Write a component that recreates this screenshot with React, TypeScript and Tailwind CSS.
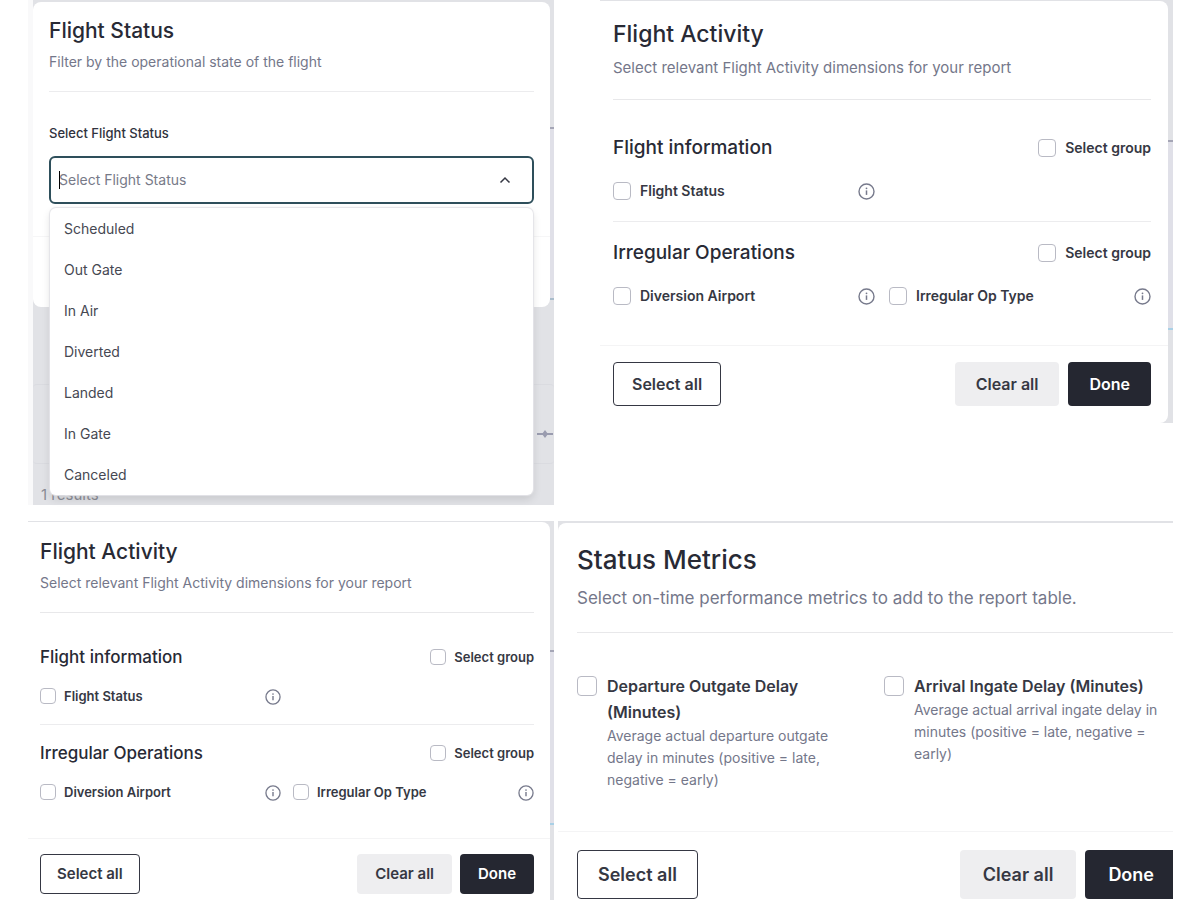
import { useState, type ReactNode } from "react";

type Size = "sm" | "md" | "lg";

const titleSize: Record<Size, string> = {
  sm: "text-[21px] leading-8",
  md: "text-[23px] leading-9",
  lg: "text-[26px] leading-10",
};
const subtitleSize: Record<Size, string> = {
  sm: "text-sm leading-[30px]",
  md: "text-[15px] leading-8",
  lg: "text-[17px] leading-9",
};
const buttonSize: Record<Size, string> = {
  sm: "h-10 text-[15px]",
  md: "h-11 text-base",
  lg: "h-[49px] text-lg",
};
const outlinePad: Record<Size, string> = { sm: "px-4", md: "px-[18px]", lg: "px-5" };
const filledPad: Record<Size, string> = { sm: "px-[18px]", md: "px-[21px]", lg: "px-[23px]" };
const boxSize: Record<Size, string> = {
  sm: "size-4",
  md: "size-[18px]",
  lg: "size-5",
};
const labelSize: Record<Size, string> = {
  sm: "gap-2 text-[13px] leading-5",
  md: "gap-[9px] text-sm leading-5",
  lg: "gap-[10px] text-base leading-[26px]",
};

function Heading({ size, title, subtitle }: { size: Size; title: string; subtitle: string }) {
  return (
    <header>
      <h2 className={"font-medium text-[#282a35] " + titleSize[size]}>{title}</h2>
      <p className={"text-[#74778a] " + subtitleSize[size]}>{subtitle}</p>
    </header>
  );
}

function Box({ size }: { size: Size }) {
  return (
    <input
      type="checkbox"
      className={
        "shrink-0 appearance-none rounded-[4px] border border-[#b9bac4] bg-white checked:bg-[#252731] " + boxSize[size]
      }
    />
  );
}

function Info({ size }: { size: Size }) {
  return (
    <button type="button" aria-label="More information" className="mt-px text-[#777a8c]">
      <svg viewBox="0 0 17 17" fill="none" className={size === "sm" ? "size-4" : "size-[17px]"}>
        <circle cx="8.5" cy="8.5" r="7.5" stroke="currentColor" strokeWidth="1.4" />
        <path d="M8.5 7.400v4.500" stroke="currentColor" strokeWidth="1.5" />
        <circle cx="8.5" cy="5.3" r="0.9" fill="currentColor" />
      </svg>
    </button>
  );
}

function CheckLabel({ size, text }: { size: Size; text: string }) {
  return (
    <label className={"flex items-center font-semibold text-[#363843] " + labelSize[size]}>
      <Box size={size} />
      {text}
    </label>
  );
}

function Group({ size, name, options }: { size: Size; name: string; options: string[] }) {
  const small = size === "sm";
  return (
    <section>
      <div className="flex items-center justify-between">
        <h3 className={"font-medium text-[#282a35] " + (small ? "text-[17px] leading-6" : "text-[19px] leading-7")}>
          {name}
        </h3>
        <CheckLabel size={size} text="Select group" />
      </div>
      <div className={"grid grid-cols-2 " + (small ? "mt-[17px] gap-x-3" : "mt-[19px] gap-x-[14px]")}>
        {options.map((o) => (
          <div key={o} className="flex items-center justify-between">
            <CheckLabel size={size} text={o} />
            <Info size={size} />
          </div>
        ))}
      </div>
    </section>
  );
}

function Actions({ size }: { size: Size }) {
  const base = "rounded-[4px] font-semibold " + buttonSize[size] + " ";
  return (
    <div className="flex justify-between">
      <button
        type="button"
        className={base + outlinePad[size] + " border border-[#353743] bg-white text-[#363843]"}
      >
        Select all
      </button>
      <div className={size === "sm" ? "flex gap-2" : "flex gap-[9px]"}>
        <button type="button" className={base + filledPad[size] + " bg-[#eeeef0] text-[#363843]"}>
          Clear all
        </button>
        <button type="button" className={base + filledPad[size] + " bg-[#252731] text-white"}>
          Done
        </button>
      </div>
    </div>
  );
}

function EdgeMarks({ children }: { children: ReactNode }) {
  return <div className="absolute inset-y-0 right-0 w-[5px] overflow-hidden">{children}</div>;
}

const statuses = ["Scheduled", "Out Gate", "In Air", "Diverted", "Landed", "In Gate", "Canceled"];

function StatusFilter() {
  const [value, setValue] = useState("");
  return (
    <div className="relative flex h-[505px] flex-col border-l-[5px] border-[#f9f9fa] bg-[#e1e2e6] pt-0.5">
      <div className="absolute top-[127px] right-0 h-[173px] w-1 border-t-2 border-b-2 border-t-[#a5a6b6] border-b-[#a9bccb] bg-[#e0e0e8]" />
      <div className="absolute top-[384px] right-0 left-0 h-20 rounded border-y border-[#dadbe0]" />
      <svg viewBox="0 0 18 10" className="absolute top-[429px] right-0 h-[10px] w-[18px]">
        <path d="M1 5h16" stroke="#9a9caf" strokeWidth="2" />
        <path d="M9 1l3 4-3 4-3-4z" fill="#9a9caf" />
      </svg>
      <span className="absolute bottom-0 left-2 text-[15px] leading-5 text-[#8b8d96]">1 results</span>
      <div className="relative mr-1 h-[305px] rounded-lg bg-white px-4 pt-[13px]">
        <Heading size="sm" title="Flight Status" subtitle="Filter by the operational state of the flight" />
        <hr className="mt-[14px] border-[#ececee]" />
        <label htmlFor="status" className="mt-[31px] block text-[13px] leading-5 font-medium text-[#30323d]">
          Select Flight Status
        </label>
        <div className="relative mt-[13px] flex h-12 items-center rounded-md border-2 border-[#2e4f5b] pr-5 pl-2">
          <span className="absolute left-2 h-[18px] w-px bg-black" />
          <input
            id="status"
            role="combobox"
            aria-expanded="true"
            aria-controls="status-list"
            value={value}
            onChange={(e) => setValue(e.target.value)}
            placeholder="Select Flight Status"
            className="min-w-0 flex-1 bg-transparent text-sm text-[#30323d] outline-none placeholder:text-[#777a88]"
          />
          <button type="button" aria-label="Close list" className="text-[#353743]">
            <svg viewBox="0 0 14 14" fill="none" className="size-[14px]">
              <path d="M2.500 9.500L7 5l4.500 4.500" stroke="currentColor" strokeWidth="1.500" />
            </svg>
          </button>
          <ul
            id="status-list"
            role="listbox"
            className="absolute top-[50px] -right-px -left-px z-10 rounded-md bg-white shadow-[0_0_1px_1px_#e4e4e8,0_4px_8px_rgba(0,0,0,0.12)]"
          >
            {statuses.map((s) => (
              <li
                key={s}
                role="option"
                aria-selected={value === s}
                onClick={() => setValue(s)}
                className="flex h-[41px] items-center px-[14px] text-sm text-[#464852]"
              >
                {s}
              </li>
            ))}
          </ul>
        </div>
        <hr className="-mx-4 mt-8 border-[#f6f6f7]" />
      </div>
    </div>
  );
}

function ActivityMedium() {
  return (
    <div className="relative bg-[#e1e2e6] pt-px pr-[5px]">
      <EdgeMarks>
        <div className="mt-[140px] h-[188px] border-t-2 border-[#a5a6b6] bg-[#e0e0e8]" />
        <div className="h-1 border-t-2 border-[#a9d0e6]" />
      </EdgeMarks>
      <div className="relative rounded-r-lg bg-white pb-[17px]">
        <div className="pt-[15px] pr-[17px] pl-[13px]">
          <Heading
            size="md"
            title="Flight Activity"
            subtitle="Select relevant Flight Activity dimensions for your report"
          />
          <hr className="mt-[15px] mb-[34px] border-[#e8e8ea]" />
          <Group size="md" name="Flight information" options={["Flight Status"]} />
          <hr className="mt-5 mb-[17px] border-[#ececee]" />
          <Group size="md" name="Irregular Operations" options={["Diversion Airport", "Irregular Op Type"]} />
        </div>
        <hr className="mt-[39px] mb-4 border-[#f4f4f5]" />
        <div className="pr-[17px] pl-[13px]">
          <Actions size="md" />
        </div>
      </div>
    </div>
  );
}

function ActivitySmall() {
  return (
    <div className="relative bg-[#e1e2e6] pt-px pr-1">
      <EdgeMarks>
        <div className="mt-[129px] h-[173px] border-t-2 border-[#a5a6b6] bg-[#e0e0e8]" />
        <div className="h-1 border-t-2 border-[#a9d0e6]" />
      </EdgeMarks>
      <div className="relative rounded-tr-lg bg-white pb-1.5">
        <div className="px-4 pt-[14px] pl-3">
          <Heading
            size="sm"
            title="Flight Activity"
            subtitle="Select relevant Flight Activity dimensions for your report"
          />
          <hr className="mt-[14px] mb-8 border-[#e8e8ea]" />
          <Group size="sm" name="Flight information" options={["Flight Status"]} />
          <hr className="mt-[18px] mb-4 border-[#ececee]" />
          <Group size="sm" name="Irregular Operations" options={["Diversion Airport", "Irregular Op Type"]} />
        </div>
        <hr className="mt-9 mb-[15px] border-[#f4f4f5]" />
        <div className="pr-4 pl-3">
          <Actions size="sm" />
        </div>
      </div>
    </div>
  );
}

function Metric({ name, description }: { name: string; description: string }) {
  return (
    <label className={"flex items-start " + labelSize.lg}>
      <span className="flex h-[26px] items-center">
        <Box size="lg" />
      </span>
      <span className="block pr-3">
        <span className="block font-semibold text-[#363843]">{name}</span>
        <span className="block text-sm leading-[22px] text-[#74778a]">{description}</span>
      </span>
    </label>
  );
}

function StatusMetrics() {
  return (
    <div className="overflow-hidden bg-[#e1e2e6] pt-0.5">
      <div className="rounded-tl-lg bg-white pb-px">
        <div className="-mr-1 pt-[17px] pl-[19px]">
          <Heading
            size="lg"
            title="Status Metrics"
            subtitle="Select on-time performance metrics to add to the report table."
          />
          <hr className="mt-4 mb-10 border-[#e8e8ea]" />
          <div className="grid grid-cols-2 gap-x-[14px]">
            <Metric
              name="Departure Outgate Delay (Minutes)"
              description="Average actual departure outgate delay in minutes (positive = late, negative = early)"
            />
            <Metric
              name="Arrival Ingate Delay (Minutes)"
              description="Average actual arrival ingate delay in minutes (positive = late, negative = early)"
            />
          </div>
        </div>
        <hr className="mt-10 mb-[18px] border-[#f4f4f5]" />
        <div className="-mr-1 pl-[19px]">
          <Actions size="lg" />
        </div>
      </div>
    </div>
  );
}

export default function App() {
  return (
    <main className="grid grid-cols-[526fr_619fr] items-start gap-y-4 bg-white pr-[27px] pl-7 font-['Inter','Open_Sans',sans-serif]">
      <StatusFilter />
      <div className="pl-[46px]">
        <ActivityMedium />
      </div>
      <ActivitySmall />
      <div className="pl-1">
        <StatusMetrics />
      </div>
    </main>
  );
}
